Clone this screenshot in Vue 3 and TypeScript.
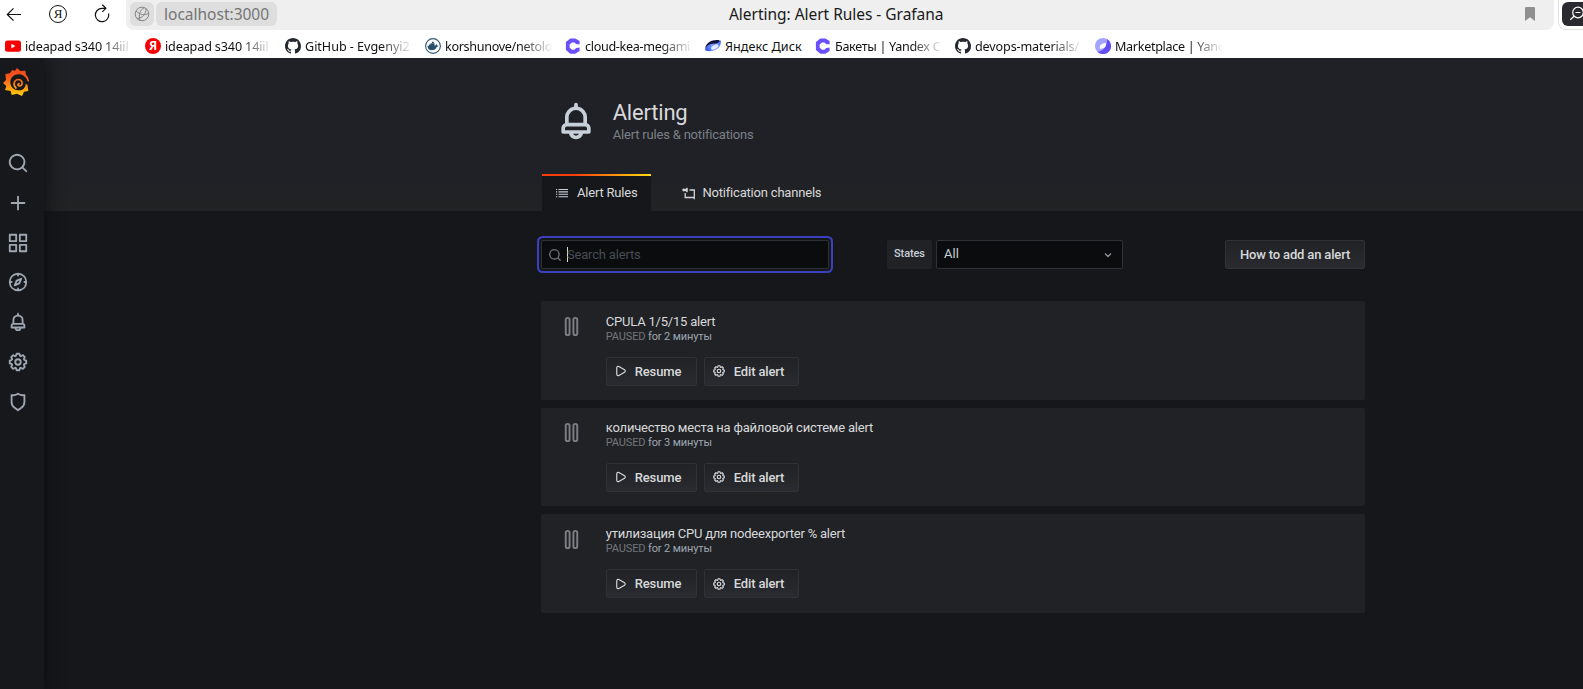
<script setup lang="ts">
interface Bookmark {
  icon: 'youtube' | 'yandex' | 'github' | 'docker' | 'cloud' | 'disk' | 'market'
  label: string
  fit?: 'compact' | 'loose' | 'looser'
}

interface AlertRule {
  title: string
  since: string
}

const bookmarks: Bookmark[] = [
  { icon: 'youtube', label: 'ideapad s340 14iil', fit: 'loose' },
  { icon: 'yandex', label: 'ideapad s340 14iil', fit: 'loose' },
  { icon: 'github', label: 'GitHub - Evgenyi2', fit: 'looser' },
  { icon: 'docker', label: 'korshunove/netolo' },
  { icon: 'cloud', label: 'cloud-kea-megami' },
  { icon: 'disk', label: 'Яндекс Диск', fit: 'compact' },
  { icon: 'cloud', label: 'Бакеты | Yandex C' },
  { icon: 'github', label: 'devops-materials/', fit: 'loose' },
  { icon: 'market', label: 'Marketplace | Yanc' },
]

const rules: AlertRule[] = [
  { title: 'CPULA 1/5/15 alert', since: 'for 2 минуты' },
  { title: 'количество места на файловой системе alert', since: 'for 3 минуты' },
  { title: 'утилизация CPU для nodeexporter % alert', since: 'for 2 минуты' },
]

const icons = {
  search: 'M21.71,20.29,18,16.61A9,9,0,1,0,16.61,18l3.68,3.68a1,1,0,0,0,1.42,0A1,1,0,0,0,21.71,20.29ZM11,18a7,7,0,1,1,7-7A7,7,0,0,1,11,18Z',
  plus: 'M19,11H13V5a1,1,0,0,0-2,0v6H5a1,1,0,0,0,0,2h6v6a1,1,0,0,0,2,0V13h6a1,1,0,0,0,0-2Z',
  apps: 'M10,13H3a1,1,0,0,0-1,1v7a1,1,0,0,0,1,1h7a1,1,0,0,0,1-1V14A1,1,0,0,0,10,13ZM9,20H4V15H9ZM21,2H14a1,1,0,0,0-1,1v7a1,1,0,0,0,1,1h7a1,1,0,0,0,1-1V3A1,1,0,0,0,21,2ZM20,9H15V4h5Zm1,4H14a1,1,0,0,0-1,1v7a1,1,0,0,0,1,1h7a1,1,0,0,0,1-1V14A1,1,0,0,0,21,13Zm-1,7H15V15h5ZM10,2H3A1,1,0,0,0,2,3v7a1,1,0,0,0,1,1h7a1,1,0,0,0,1-1V3A1,1,0,0,0,10,2ZM9,9H4V4H9Z',
  compass: 'M12,2A10,10,0,1,0,22,12,10,10,0,0,0,12,2Zm1,17.93V19a1,1,0,0,0-2,0v.93A8,8,0,0,1,4.07,13H5a1,1,0,0,0,0-2H4.07A8,8,0,0,1,11,4.07V5a1,1,0,0,0,2,0V4.07A8,8,0,0,1,19.93,11H19a1,1,0,0,0,0,2h.93A8,8,0,0,1,13,19.93ZM15.14,7.55l-5,2.12a1,1,0,0,0-.52.52l-2.12,5a1,1,0,0,0,.21,1.1,1,1,0,0,0,.7.3.93.93,0,0,0,.4-.09l5-2.12a1,1,0,0,0,.52-.52l2.12-5a1,1,0,0,0-1.31-1.31Zm-2.49,5.1-2.28,1,1-2.28,2.28-1Z',
  bell: 'M18,13.18V10a6,6,0,0,0-5-5.91V3a1,1,0,0,0-2,0V4.09A6,6,0,0,0,6,10v3.18A3,3,0,0,0,4,16v2a1,1,0,0,0,1,1H8.14a4,4,0,0,0,7.72,0H19a1,1,0,0,0,1-1V16A3,3,0,0,0,18,13.18ZM8,10a4,4,0,0,1,8,0v3H8Zm4,10a2,2,0,0,1-1.72-1h3.44A2,2,0,0,1,12,20Zm6-3H6V16a1,1,0,0,1,1-1H17a1,1,0,0,1,1,1Z',
  cog: 'M21.32,9.55l-1.89-.63.89-1.78A1,1,0,0,0,20.13,6L18,3.87a1,1,0,0,0-1.15-.19l-1.78.89-.63-1.89A1,1,0,0,0,13.5,2h-3a1,1,0,0,0-.95.68L8.92,4.57,7.14,3.68A1,1,0,0,0,6,3.87L3.87,6a1,1,0,0,0-.19,1.15l.89,1.78-1.89.63A1,1,0,0,0,2,10.5v3a1,1,0,0,0,.68.95l1.89.63-.89,1.78A1,1,0,0,0,3.87,18L6,20.13a1,1,0,0,0,1.15.19l1.78-.89.63,1.89a1,1,0,0,0,.95.68h3a1,1,0,0,0,.95-.68l.63-1.89,1.78.89A1,1,0,0,0,18,20.13L20.13,18a1,1,0,0,0,.19-1.15l-.89-1.78,1.89-.63A1,1,0,0,0,22,13.5v-3A1,1,0,0,0,21.32,9.55ZM20,12.78l-1.2.4A2,2,0,0,0,17.64,16l.57,1.14-1.1,1.1L16,17.64a2,2,0,0,0-2.79,1.16l-.4,1.2H11.22l-.4-1.2A2,2,0,0,0,8,17.64l-1.14.57-1.1-1.1L6.36,16A2,2,0,0,0,5.2,13.18L4,12.78V11.22l1.2-.4A2,2,0,0,0,6.36,8L5.79,6.89l1.1-1.1L8,6.36A2,2,0,0,0,10.82,5.2l.4-1.2h1.56l.4,1.2A2,2,0,0,0,16,6.36l1.14-.57,1.1,1.1L17.64,8a2,2,0,0,0,1.16,2.79l1.2.4ZM12,8a4,4,0,1,0,4,4A4,4,0,0,0,12,8Zm0,6a2,2,0,1,1,2-2A2,2,0,0,1,12,14Z',
  shield: 'M19.63,3.65a1,1,0,0,0-.84-.2,8,8,0,0,1-6.22-1.27,1,1,0,0,0-1.14,0A8,8,0,0,1,5.21,3.45a1,1,0,0,0-.84.2A1,1,0,0,0,4,4.43v7.45a9,9,0,0,0,3.77,7.33l3.65,2.6a1,1,0,0,0,1.16,0l3.65-2.6A9,9,0,0,0,20,11.88V4.43A1,1,0,0,0,19.63,3.65ZM18,11.88a7,7,0,0,1-2.93,5.7L12,19.77,8.93,17.58A7,7,0,0,1,6,11.88V5.58a10,10,0,0,0,6-1.39,10,10,0,0,0,6,1.39Z',
  play: 'M18.54,9,8.88,3.46a3.42,3.42,0,0,0-5.13,3V17.58A3.42,3.42,0,0,0,7.17,21a3.43,3.43,0,0,0,1.71-.46L18.54,15a3.42,3.42,0,0,0,0-5.92Zm-1,4.19L7.88,18.81a1.44,1.44,0,0,1-1.42,0,1.42,1.42,0,0,1-.71-1.23V6.42a1.42,1.42,0,0,1,.71-1.23A1.51,1.51,0,0,1,7.17,5a1.54,1.54,0,0,1,.71.19l9.66,5.58a1.42,1.42,0,0,1,0,2.46Z',
  pause: 'M16,2a3,3,0,0,0-3,3V19a3,3,0,0,0,6,0V5A3,3,0,0,0,16,2Zm1,17a1,1,0,0,1-2,0V5a1,1,0,0,1,2,0ZM8,2A3,3,0,0,0,5,5V19a3,3,0,0,0,6,0V5A3,3,0,0,0,8,2ZM9,19a1,1,0,0,1-2,0V5A1,1,0,0,1,9,5Z',
}

const sideItems = [icons.search, icons.plus, icons.apps, icons.compass, icons.bell, icons.cog, icons.shield]
</script>

<template>
  <div class="window">
    <header class="toolbar">
      <div class="nav">
        <svg class="nav-icon" viewBox="0 0 20 20"><path d="M17 10.500H3.500M9.500 4.300 3.300 10.500l6.200 6.200" /></svg>
        <span class="ya-home">Я</span>
        <svg class="nav-icon" viewBox="0 0 20 20"><path d="M16.600 9.500A6.700 6.700 0 1 1 10 4.300h3.600M10.300.8 13.900 4.300l-3.600 3.600" /></svg>
      </div>
      <div class="address">
        <span class="chip globe">
          <svg viewBox="0 0 16 16"><circle cx="8" cy="8" r="6.800" /><path d="M2 5c4.500 4 8 4.500 12.500 2.500M10.500 1.700C5.500 4 4.500 9 6 14.500M3 12.500C9 12 12 8 12 2.500" /></svg>
        </span>
        <span class="chip host">localhost:3000</span>
        <span class="page-title">Alerting: Alert Rules - Grafana</span>
        <svg class="flag" viewBox="0 0 10 14"><path d="M0 1.200Q0 0 1.200 0H8.800Q10 0 10 1.200V14L5 10.300 0 14Z" /></svg>
      </div>
      <div class="ext">
        <div class="ext-inner">
          <svg viewBox="0 0 16 16"><circle cx="9" cy="6.500" r="5.300" /><path d="M5 10.300 1.300 13.800M6.500 6.500h5" /></svg>
        </div>
      </div>
    </header>

    <nav class="bookmarks">
      <div v-for="(b, i) in bookmarks" :key="i" class="bookmark" :class="b.fit">
        <span v-if="b.icon === 'yandex'" class="bm-icon ya">Я</span>
        <svg v-else class="bm-icon" viewBox="0 0 16 16">
          <template v-if="b.icon === 'youtube'">
            <rect y="2.500" width="16" height="11.300" rx="2.500" fill="#f60000" />
            <path d="M6.400 5.800v4.600l4-2.300z" fill="#fff" />
          </template>
          <path
            v-else-if="b.icon === 'github'"
            fill="#24292f"
            d="M8 0C3.580 0 0 3.580 0 8c0 3.540 2.290 6.530 5.470 7.590.4.070.55-.17.55-.38 0-.19-.01-.82-.01-1.490-2.010.37-2.530-.49-2.690-.94-.09-.23-.48-.94-.82-1.130-.28-.15-.68-.52-.01-.53.63-.01 1.080.58 1.230.82.72 1.210 1.870.87 2.330.66.07-.52.28-.87.51-1.070-1.780-.2-3.640-.89-3.640-3.950 0-.87.31-1.590.82-2.150-.08-.2-.36-1.020.08-2.120 0 0 .67-.21 2.200.82.64-.18 1.320-.27 2-.27s1.360.09 2 .27c1.530-1.040 2.200-.82 2.200-.82.44 1.100.16 1.920.08 2.120.51.56.82 1.270.82 2.150 0 3.070-1.870 3.750-3.650 3.950.29.25.54.73.54 1.480 0 1.070-.01 1.930-.01 2.200 0 .21.15.46.55.38A8.010 8.010 0 0 0 16 8c0-4.420-3.580-8-8-8z"
          />
          <template v-else-if="b.icon === 'docker'">
            <circle cx="8" cy="8" r="7.400" fill="#fff" stroke="#32566e" stroke-width="1.100" />
            <path d="M2.500 7.700h1.500V6.400h1.500V5.200h4v2.400h1q.6-.4.400-1.600 1.200.5 1.200 1.400.9 0 1.600.4-.6 1.100-2 1.100-1.400 3.300-4.900 3.300Q2.700 12.200 2.500 7.700z" fill="#24506b" />
            <path d="M7 3.700h1.800v1.300H7z" fill="#24506b" />
          </template>
          <path
            v-else-if="b.icon === 'cloud'"
            fill="#6a50fb"
            d="M5.300.4h5L14.600 3v3.600l-3.500-.5-1.600-1.600H7L4.600 6.600v3L7 11.700h2.500l1.600-1.700 3.500-.5v3.600l-4.300 2.600h-5L.9 12V4z"
          />
          <template v-else-if="b.icon === 'disk'">
            <defs>
              <linearGradient id="disk-body" x1="0" x2="1" y1=".8" y2=".3">
                <stop offset="0" stop-color="#2a55f5" />
                <stop offset=".5" stop-color="#7f9bff" />
                <stop offset="1" stop-color="#4f72f5" />
              </linearGradient>
            </defs>
            <path d="M0 11.800C1.500 4.500 8 1.800 15.800 2.500c.6 5-2.800 9-8 10.300-4 .8-7.500.3-7.800-1z" fill="url(#disk-body)" />
            <path d="M0 11C1 4.500 7 1.500 14 2.200c1.500 1.500-1 3-5 3.400C5 6.100 1.500 7.500 0 11z" fill="#10113a" />
            <ellipse cx="9.800" cy="9" rx="4" ry="2" transform="rotate(-28 9.800 9)" fill="#e3ebff" />
          </template>
          <template v-else>
            <circle cx="8" cy="8" r="8" fill="#a4a4ff" />
            <path d="M12 1.100A8 8 0 1 1 2.400 13.700C8 13.500 12.500 8 12 1.100z" fill="#644cf5" />
            <path d="M5 10.800C4 7.600 6.500 5.200 11 5.100c.2 3.600-1.600 6-6 5.700z" fill="#fff" />
          </template>
        </svg>
        <span class="bm-label">{{ b.label }}</span>
      </div>
    </nav>

    <div class="app">
      <aside class="sidebar">
        <svg class="logo" viewBox="0 0 84 84">
          <defs>
            <linearGradient id="flame" gradientUnits="userSpaceOnUse" x1="0" x2="0" y1="0" y2="84">
              <stop offset="0" stop-color="#f2451c" />
              <stop offset=".35" stop-color="#f9591b" />
              <stop offset="1" stop-color="#fed30a" />
            </linearGradient>
          </defs>
          <path fill="url(#flame)" d="M42 0 52 9 67 8 69 20Q77 27 78 38L73 48 76 69 63 71 57 84 42 77 26 81 23 69 6 66 10 54 0 45 9 36 7 18 21 16 27 6 36 8Z" />
          <path d="M68 48C67 61 58 68 46 67 31 66 22 56 22 43 22 29 33 19 47 19 60 19 70 27 74 40L79 43 74 50Z" fill="#17181b" />
          <path d="M48 47C44 48 43 53 48 54 55 55 59 48 57 42 53 32 38 32 34 43 32 50 34 56 39 60" fill="none" stroke="url(#flame)" stroke-width="5" stroke-linecap="round" />
        </svg>
        <div class="side-list">
          <svg v-for="(d, i) in sideItems" :key="i" class="side-icon" viewBox="0 0 24 24"><path :d="d" /></svg>
        </div>
      </aside>

      <main class="content">
        <section class="page-header">
          <div class="column">
            <div class="heading">
              <svg class="head-icon" viewBox="0 0 24 24"><path :d="icons.bell" /></svg>
              <div>
                <h1>Alerting</h1>
                <p>Alert rules &amp; notifications</p>
              </div>
            </div>
            <div class="tabs">
              <div class="tab active">
                <svg viewBox="0 0 14 14"><path d="M3.500 3.500H13M3.500 5.900H13M3.500 8.300H13M3.500 10.700H13M1 3.500h1.200M1 5.900h1.200M1 8.300h1.200M1 10.700h1.200" stroke="#c7d0d9" stroke-width="1.100" /></svg>
                <span>Alert Rules</span>
              </div>
              <div class="tab second">
                <svg viewBox="0 0 14 14" fill="none" stroke="#d0d3d8" stroke-width="1.300"><path d="M7.500 4h4.800v7.500M3.200 7V11.500H9.500M5.500 2 3 4l2.500 2M1 4h5M9.500 11.500h2.800v1.800" /><circle cx="1.700" cy="4" r=".8" /></svg>
                <span>Notification channels</span>
              </div>
            </div>
          </div>
        </section>

        <section class="column body">
          <div class="filters">
            <div class="search">
              <svg viewBox="0 0 24 24"><path :d="icons.search" /></svg>
              <span class="caret"></span>
              <span class="placeholder">Search alerts</span>
            </div>
            <div class="states">
              <span class="label">States</span>
              <div class="select">
                <span>All</span>
                <svg viewBox="0 0 10 10"><path d="M2 3.500 5 6.500 8 3.500" /></svg>
              </div>
            </div>
            <button class="btn how">How to add an alert</button>
          </div>

          <ol class="rules">
            <li v-for="r in rules" :key="r.title" class="rule">
              <svg class="state-icon" viewBox="0 0 24 24"><path :d="icons.pause" /></svg>
              <div>
                <div class="rule-title">{{ r.title }}</div>
                <div class="rule-state"><span>PAUSED</span> {{ r.since }}</div>
                <div class="actions">
                  <button class="btn resume">
                    <svg viewBox="0 0 24 24"><path :d="icons.play" /></svg>
                    Resume
                  </button>
                  <button class="btn edit">
                    <svg viewBox="0 0 24 24"><path :d="icons.cog" /></svg>
                    Edit alert
                  </button>
                </div>
              </div>
            </li>
          </ol>
        </section>
      </main>
    </div>
  </div>
</template>

<style>
body {
  margin: 0;
  overflow: hidden;
}
</style>

<style scoped>
.window {
  width: 1583px;
  height: 689px;
  overflow: hidden;
  display: flex;
  flex-direction: column;
  background: #fff;
  font-family: Roboto, "Noto Sans", sans-serif;
}

.window * {
  box-sizing: border-box;
}

svg {
  display: block;
  flex: none;
}

/* Browser chrome */
.toolbar {
  height: 30px;
  display: flex;
  font-family: "Noto Sans", sans-serif;
}

.nav {
  flex: none;
  width: 126px;
  height: 28px;
  padding-left: 4px;
  display: flex;
  align-items: center;
  gap: 25px;
}

.nav-icon {
  width: 20px;
  height: 20px;
  fill: none;
  stroke: #111;
  stroke-width: 1.200;
}

.ya-home {
  width: 18px;
  height: 18px;
  border: 1px solid #111;
  border-radius: 50%;
  font: 13px/16px "Liberation Serif", serif;
  text-align: center;
  color: #111;
}

.address {
  flex: none;
  width: 1428px;
  height: 30px;
  padding: 2px 19px 4px 4px;
  display: flex;
  align-items: center;
  background: #efefef;
  border-radius: 0 0 8px 8px;
}

.chip {
  height: 24px;
  border-radius: 6px;
  background: #dedede;
  color: #757575;
}

.globe {
  width: 24px;
  padding: 4px;
}

.globe svg {
  width: 16px;
  height: 16px;
  fill: none;
  stroke: #858585;
  stroke-width: 1;
}

.host {
  width: 121px;
  margin-left: 2px;
  padding-left: 8px;
  font-size: 15.500px;
  line-height: 24px;
  white-space: nowrap;
}

.page-title {
  margin-left: 452px;
  width: 230px;
  font-size: 15.500px;
  letter-spacing: -0.030px;
  line-height: 24px;
  white-space: nowrap;
  color: #1a1a1a;
}

.flag {
  width: 10px;
  height: 14px;
  margin-left: auto;
  fill: #8f8f8f;
}

.ext {
  flex: none;
  width: 25px;
  height: 30px;
  margin-left: 4px;
  padding: 2px 0 0 3px;
  overflow: hidden;
  border: solid #e2e2e2;
  border-width: 0 0 1px 1px;
  border-radius: 0 0 0 8px;
}

.ext-inner {
  width: 40px;
  height: 24px;
  padding: 4px 0 0 7px;
  border-radius: 6px;
  background: #2b2a31;
}

.ext-inner svg {
  width: 16px;
  height: 16px;
  fill: none;
  stroke: #fff;
  stroke-width: 1.200;
}

.bookmarks {
  height: 28px;
  padding-left: 5px;
  display: flex;
  font-family: "Noto Sans", sans-serif;
  color: #111;
}

.bookmark {
  width: 140px;
  height: 32px;
  display: flex;
  align-items: center;
  gap: 4px;
}

.bookmark.compact {
  width: 110px;
}

.bm-icon {
  width: 16px;
  height: 16px;
  flex: none;
}

.bm-icon.ya {
  border-radius: 50%;
  background: #f60000;
  color: #fff;
  font-size: 12px;
  font-weight: 700;
  line-height: 15px;
  text-align: center;
}

.bm-label {
  flex: none;
  width: 107px;
  margin-top: 2px;
  overflow: hidden;
  font-size: 12.600px;
  letter-spacing: -0.320px;
  line-height: 18px;
  white-space: nowrap;
  -webkit-mask-image: linear-gradient(90deg, #000 76px, transparent 108px);
  mask-image: linear-gradient(90deg, #000 76px, transparent 108px);
}

.loose .bm-label {
  letter-spacing: -0.140px;
}

.looser .bm-label {
  letter-spacing: -0.040px;
}

.compact .bm-label {
  width: 86px;
  letter-spacing: 0.050px;
  -webkit-mask-image: none;
  mask-image: none;
}

/* Grafana */
.app {
  height: 631px;
  display: flex;
  overflow: hidden;
  background: #16171a;
}

.sidebar {
  position: relative;
  z-index: 1;
  width: 44px;
  background: #17181b;
  box-shadow: 0 0 20px #0b0c0e;
}

.logo {
  width: 28px;
  height: 28px;
  margin: 10px 0 0 2.700px;
}

.side-list {
  margin-top: 56px;
  padding-left: 6.500px;
  display: flex;
  flex-direction: column;
  gap: 17.750px;
}

.side-icon {
  width: 22px;
  height: 22px;
  fill: #9fa7b3;
}

.content {
  width: 1539px;
}

.page-header {
  height: 153px;
  background: linear-gradient(#202126 80%, #222324);
}

.column {
  width: 824px;
  margin-left: 497px;
}

.heading {
  height: 116px;
  padding: 39px 0 0 13px;
  display: flex;
  gap: 14.700px;
}

.head-icon {
  width: 44px;
  height: 44px;
  margin-top: 1.500px;
  fill: #c7d0d9;
}

h1 {
  margin: 3px 0 0;
  font-size: 22px;
  font-weight: 400;
  letter-spacing: -0.200px;
  line-height: 26px;
  color: #d8d9da;
}

p {
  margin: 0;
  font-size: 13px;
  letter-spacing: -0.190px;
  line-height: 18px;
  color: #7b8087;
}

.tabs {
  display: flex;
}

.tab {
  height: 37px;
  display: flex;
  align-items: center;
  gap: 8px;
  font-size: 13px;
  letter-spacing: -0.200px;
  color: #d8d9da;
}

.tab svg {
  width: 14px;
  height: 14px;
}

.tab.active {
  position: relative;
  width: 109px;
  margin-left: 1px;
  padding-left: 13px;
  background: #16171a;
}

.tab.active::before {
  content: "";
  position: absolute;
  inset: 0 0 auto;
  height: 2px;
  background: linear-gradient(90deg, #f83e0c 30%, #ffdb0f 99%);
}

.tab.second {
  margin-left: 31px;
  gap: 6.500px;
}

.filters {
  display: flex;
  padding-top: 29px;
}

.search {
  width: 288px;
  height: 29px;
  padding-left: 6px;
  display: flex;
  align-items: center;
  background: #0b0c0e;
  border: 1px solid #2c3235;
  border-radius: 2px;
  box-shadow: 0 0 0 2px #161719, 0 0 0 4px #3c40c0;
  color: #464c54;
  font-size: 13px;
  letter-spacing: -0.190px;
}

.search svg {
  width: 14px;
  height: 14px;
  fill: #7b8087;
}

.caret {
  width: 1px;
  height: 15px;
  margin-left: 5px;
  background: #d8d9da;
}

.placeholder {
  margin-left: -1px;
}

.states {
  margin-left: 58px;
  display: flex;
  gap: 4px;
}

.label {
  width: 45px;
  height: 29px;
  background: #202226;
  border-radius: 2px;
  color: #c7d0d9;
  font-size: 11px;
  font-weight: 500;
  letter-spacing: -0.100px;
  line-height: 27px;
  text-align: center;
}

.select {
  width: 187px;
  height: 29px;
  padding: 0 9px 2px 7px;
  display: flex;
  align-items: center;
  justify-content: space-between;
  background: #0b0c0e;
  border: 1px solid #2c3235;
  border-radius: 2px;
  color: #c7d0d9;
  font-size: 13px;
}

.select svg {
  width: 10px;
  height: 10px;
  margin-top: 3px;
  fill: none;
  stroke: #8e949c;
  stroke-width: 1.300;
}

.btn {
  height: 29px;
  padding: 0;
  display: flex;
  align-items: center;
  background: linear-gradient(#202226, #292b30);
  border: 1px solid #2f3237;
  border-radius: 2px;
  color: #d8d9da;
  font: 500 13px Roboto, sans-serif;
  letter-spacing: -0.160px;
  white-space: nowrap;
}

.how {
  width: 140px;
  margin-left: auto;
  justify-content: center;
}

.rules {
  margin: 32.400px 0 0;
  padding: 0;
  list-style: none;
  display: flex;
  flex-direction: column;
  gap: 8px;
}

.rule {
  height: 98.400px;
  padding: 11.200px 0 0 19.300px;
  display: flex;
  gap: 22.500px;
  background: #202226;
  border-radius: 2px;
}

.state-icon {
  width: 23px;
  height: 23px;
  margin-top: 2.400px;
  fill: #7b8087;
}

.rule-title {
  font-size: 13px;
  letter-spacing: -0.210px;
  line-height: 17px;
  color: #d8d9da;
}

.rule-state {
  font-size: 11px;
  letter-spacing: -0.130px;
  line-height: 13px;
  color: #9fa7b3;
}

.rule-state span {
  color: #73767c;
}

.actions {
  margin-top: 14px;
  display: flex;
  gap: 7px;
}

.actions svg {
  width: 14px;
  height: 14px;
  fill: #d8d9da;
}

.resume {
  width: 91px;
  padding-left: 7px;
  gap: 7px;
}

.edit {
  width: 95px;
  padding-left: 7px;
  gap: 8px;
}
</style>
